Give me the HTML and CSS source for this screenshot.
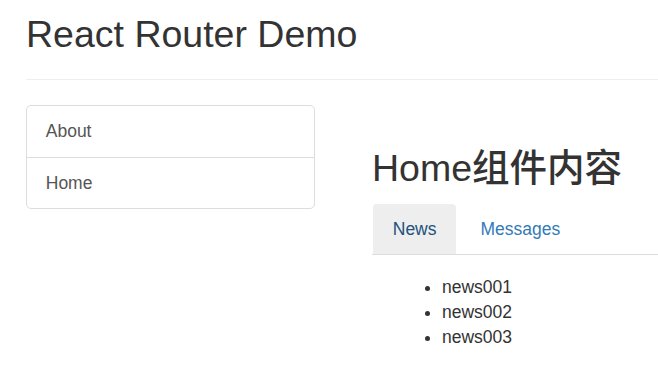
FILE: index.html
```html
<!DOCTYPE html>
<html>
  <head>
    <title>React Router Demo</title>
    <link rel="stylesheet" href="styles.css">
  </head>
  <body>
    <div class="page-header">
      <h2>React Router Demo</h2>
    </div>
    <div class="main">
      <div class="side">
        <div class="list-group">
          <a class="list-group-item" href="#about">About</a>
          <a class="list-group-item" href="#home">Home</a>
        </div>
      </div>
      <div class="content">
        <h2>Home组件内容</h2>
        <ul class="nav-tabs">
          <li><a class="active" href="#news">News</a></li>
          <li><a href="#messages">Messages</a></li>
        </ul>
        <ul class="news-list">
          <li>news001</li>
          <li>news002</li>
          <li>news003</li>
        </ul>
      </div>
    </div>
  </body>
</html>
```

FILE: styles.css
```css
body {
  margin: 0;
  color: #333;
  background: #fff;
  font-family: "Liberation Sans", Arial, "Noto Sans CJK SC", sans-serif;
  font-size: 17.5px;
  line-height: 25px;
}
a {
  text-decoration: none;
}
h2 {
  font-size: 37.5px;
  font-weight: 500;
  line-height: 41px;
}
.page-header {
  margin-left: 26px;
  padding-bottom: 24px;
  border-bottom: 1px solid #eee;
}
.page-header h2 {
  margin: 14px 0 0;
}
.main {
  display: flex;
  margin-top: 25px;
  padding-left: 26px;
}
.side {
  width: 289px;
  flex: none;
}
.list-group {
  display: flex;
  flex-direction: column;
  border: 1px solid #ddd;
  border-radius: 5px;
}
.list-group-item {
  padding: 13px 18.75px 12.5px;
  color: #555;
}
.list-group-item + .list-group-item {
  border-top: 1px solid #ddd;
}
.content {
  flex: 1;
  margin-left: 57px;
}
.content h2 {
  margin: 43px 0 14px;
}
.nav-tabs {
  display: flex;
  margin: 0;
  padding: 0;
  list-style: none;
  border-bottom: 1px solid #ddd;
}
.nav-tabs li {
  margin-bottom: -1px;
}
.nav-tabs a {
  display: block;
  margin-right: 2.5px;
  padding: 12.5px 19.75px;
  color: #337ab7;
  border: 1px solid transparent;
  border-radius: 5px 5px 0 0;
  background-clip: padding-box;
}
.nav-tabs a.active {
  color: #23527c;
  background-color: #eee;
}
.news-list {
  margin: 20px 0 0;
  padding-left: 70px;
}
```
